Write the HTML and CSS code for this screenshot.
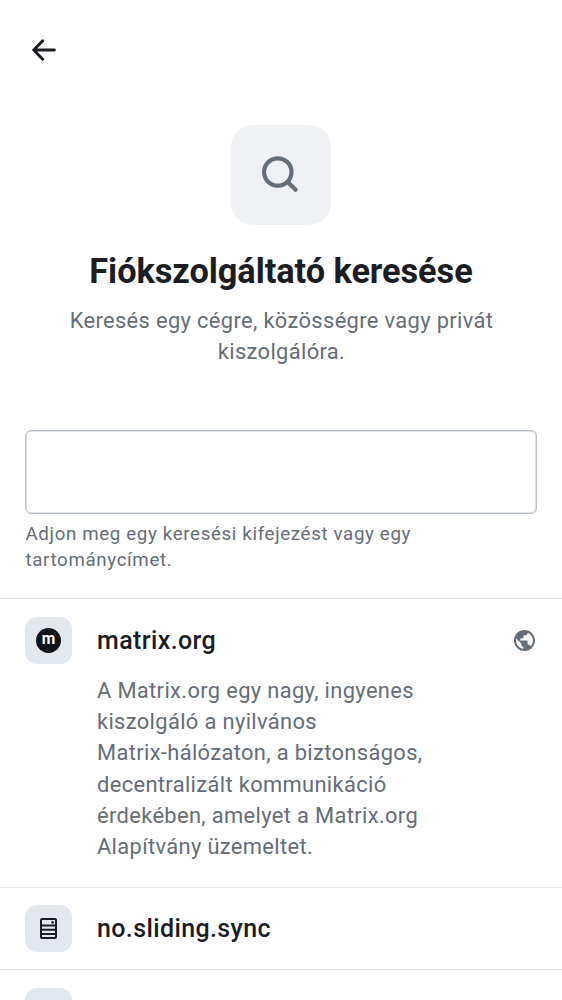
FILE: index.html
```html
<!DOCTYPE html>
<html lang="hu">
<head>
<meta charset="utf-8">
<title>Fiókszolgáltató keresése</title>
<link rel="stylesheet" href="styles.css">
</head>
<body>
<main class="screen">
  <header class="topbar">
    <svg class="back" viewBox="0 0 24 22" fill="none" stroke="#1b1d22" stroke-width="2.9" stroke-linecap="round" stroke-linejoin="round"><path d="M22.400 11H1.900M10.700 1.800 1.700 11l9 9.200"/></svg>
  </header>
  <section class="hero">
    <div class="hero-icon">
      <svg class="search" viewBox="0 0 40 40" fill="none" stroke="#656d77" stroke-width="4.200" stroke-linecap="round"><circle cx="17.800" cy="17" r="13.700"/><path d="m28 27.200 7.600 7.500"/></svg>
    </div>
    <h1 class="title">Fiókszolgáltató keresése</h1>
    <p class="subtitle">Keresés egy cégre, közösségre vagy privát<br>kiszolgálóra.</p>
  </section>
  <section class="search-field">
    <input class="field" type="text" aria-label="Keresés">
    <p class="hint">Adjon meg egy keresési kifejezést vagy egy<br>tartománycímet.</p>
  </section>
  <ul class="providers">
    <li class="provider first">
      <div class="avatar"><span class="matrix">m</span></div>
      <div class="info">
        <h2 class="name">matrix.org</h2>
        <p class="description">A Matrix.org egy nagy, ingyenes<br>kiszolgáló a nyilvános<br>Matrix-hálózaton, a biztonságos,<br>decentralizált kommunikáció<br>érdekében, amelyet a Matrix.org<br>Alapítvány üzemeltet.</p>
      </div>
      <svg class="globe" viewBox="2 2 20 20" fill="#656d77"><path d="M12 2C6.480 2 2 6.480 2 12s4.480 10 10 10 10-4.480 10-10S17.520 2 12 2zm-1 17.930c-3.950-.49-7-3.850-7-7.930 0-.62.080-1.210.21-1.790L9 15v1c0 1.100.9 2 2 2v1.930zm6.900-2.540c-.26-.81-1-1.390-1.900-1.390h-1v-3c0-.55-.45-1-1-1H8v-2h2c.55 0 1-.45 1-1V7h2c1.100 0 2-.9 2-2v-.41c2.930 1.190 5 4.060 5 7.410 0 2.080-.8 3.970-2.100 5.390z"/></svg>
    </li>
    <li class="provider second">
      <div class="avatar">
        <svg class="server" viewBox="0 0 17 21" fill="none" stroke="#1b1d22" stroke-width="2"><rect x="1" y="1" width="15" height="19" rx="1"/><path d="M1 7.500h15M1 11.700h15M1 15.900h15"/><circle cx="12.600" cy="4.400" r="1.300" fill="#1b1d22" stroke="none"/></svg>
      </div>
      <div class="info"><h2 class="name">no.sliding.sync</h2></div>
    </li>
    <li class="provider third"><div class="avatar"></div></li>
  </ul>
</main>
</body>
</html>
```

FILE: styles.css
```css
* { box-sizing: border-box; margin: 0; padding: 0; }
body { background: #fff; font-family: Roboto, "Liberation Sans", sans-serif; color: #1b1d22; }
.screen { width: 562px; height: 1000px; overflow: hidden; display: flex; flex-direction: column; }
.topbar { height: 125px; flex: none; padding: 39px 32px; }
.back { display: block; width: 24px; height: 22px; }
.hero { height: 305px; flex: none; display: flex; flex-direction: column; align-items: center; text-align: center; }
.hero-icon { width: 100px; height: 100px; border-radius: 22px; background: #f0f1f5; display: flex; padding: 30px; }
.search { width: 40px; height: 40px; margin-left: -.8px; }
.title { margin-top: 24px; font-size: 34.35px; line-height: 44px; font-weight: 700; letter-spacing: -.06px; white-space: nowrap; }
.subtitle { margin-top: 12px; padding-left: 1px; font-size: 21.86px; line-height: 31.2px; letter-spacing: .36px; color: #656d77; white-space: nowrap; }
.search-field { height: 168px; flex: none; padding: 0 25px; }
.field { display: block; width: 512px; height: 84px; border: 1px solid #b9c0cd; border-radius: 6px; box-shadow: inset 0 0 0 .5px #b9c0cd; background: #fff; outline: none; }
.hint { margin-top: 7px; padding-left: .5px; font-size: 18.73px; line-height: 26.4px; letter-spacing: .64px; color: #656d77; white-space: nowrap; }
.providers { list-style: none; }
.provider { display: flex; align-items: flex-start; border-top: 1px solid #e2e4ea; padding: 18px 25px 0; }
.first { height: 289px; }
.second { height: 82px; padding-top: 17px; }
.third { height: 82px; }
.avatar { width: 47px; height: 47px; flex: none; border-radius: 12px; background: #e3e7f0; display: flex; align-items: center; justify-content: center; }
.matrix { width: 25px; height: 25px; border-radius: 50%; background: #101317; color: #fff; font-size: 15.6px; font-weight: 700; line-height: 23px; text-align: center; }
.info { margin-left: 25px; flex: 1; white-space: nowrap; }
.name { font-size: 25px; line-height: 47px; font-weight: 500; letter-spacing: .38px; }
.description { margin-top: 11px; font-size: 21.86px; line-height: 31.2px; letter-spacing: .36px; color: #656d77; }
.globe { width: 21px; height: 21px; margin: 13px 2px 0 0; }
.server { width: 17px; height: 21px; }
```
